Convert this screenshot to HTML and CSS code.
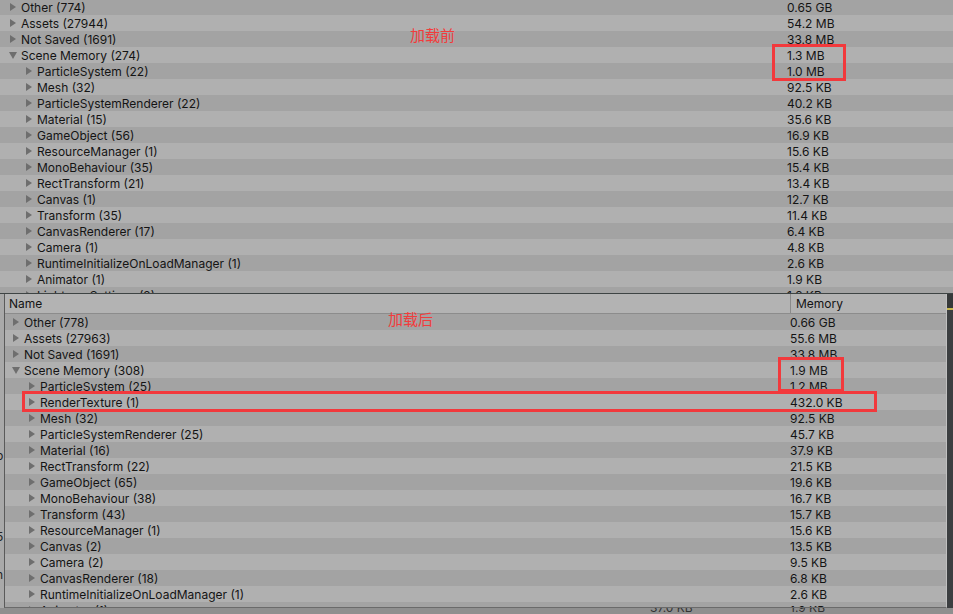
FILE: index.html
```html
<!DOCTYPE html>
<html>
<head>
<meta charset="utf-8">
<link rel="stylesheet" href="styles.css">
</head>
<body>
<div class="screen">
  <div class="top-panel">
    <div class="list list-top">
      <div class="row dark"><div class="name d0"><i class="arr"></i>Other (774)</div><div class="mem">0.65 GB</div></div>
      <div class="row light"><div class="name d0"><i class="arr"></i>Assets (27944)</div><div class="mem">54.2 MB</div></div>
      <div class="row dark"><div class="name d0"><i class="arr"></i>Not Saved (1691)</div><div class="mem">33.8 MB</div></div>
      <div class="row light"><div class="name d0"><i class="arr open"></i>Scene Memory (274)</div><div class="mem">1.3 MB</div></div>
      <div class="row dark"><div class="name d1"><i class="arr"></i>ParticleSystem (22)</div><div class="mem">1.0 MB</div></div>
      <div class="row light"><div class="name d1"><i class="arr"></i>Mesh (32)</div><div class="mem">92.5 KB</div></div>
      <div class="row dark"><div class="name d1"><i class="arr"></i>ParticleSystemRenderer (22)</div><div class="mem">40.2 KB</div></div>
      <div class="row light"><div class="name d1"><i class="arr"></i>Material (15)</div><div class="mem">35.6 KB</div></div>
      <div class="row dark"><div class="name d1"><i class="arr"></i>GameObject (56)</div><div class="mem">16.9 KB</div></div>
      <div class="row light"><div class="name d1"><i class="arr"></i>ResourceManager (1)</div><div class="mem">15.6 KB</div></div>
      <div class="row dark"><div class="name d1"><i class="arr"></i>MonoBehaviour (35)</div><div class="mem">15.4 KB</div></div>
      <div class="row light"><div class="name d1"><i class="arr"></i>RectTransform (21)</div><div class="mem">13.4 KB</div></div>
      <div class="row dark"><div class="name d1"><i class="arr"></i>Canvas (1)</div><div class="mem">12.7 KB</div></div>
      <div class="row light"><div class="name d1"><i class="arr"></i>Transform (35)</div><div class="mem">11.4 KB</div></div>
      <div class="row dark"><div class="name d1"><i class="arr"></i>CanvasRenderer (17)</div><div class="mem">6.4 KB</div></div>
      <div class="row light"><div class="name d1"><i class="arr"></i>Camera (1)</div><div class="mem">4.8 KB</div></div>
      <div class="row dark"><div class="name d1"><i class="arr"></i>RuntimeInitializeOnLoadManager (1)</div><div class="mem">2.6 KB</div></div>
      <div class="row light"><div class="name d1"><i class="arr"></i>Animator (1)</div><div class="mem">1.9 KB</div></div>
      <div class="row dark"><div class="name d1"><i class="arr"></i>LightmapSettings (2)</div><div class="mem">1.6 KB</div></div>
    </div>
  </div>

  <div class="lower">
    <div class="left-strip">
      <span class="frag f1">p</span>
      <span class="frag f2">5</span>
      <span class="frag f3">n</span>
    </div>
    <div class="panel">
      <div class="header">
        <div class="hname">Name</div>
        <div class="hmem">Memory</div>
      </div>
      <div class="list list-bottom">
        <div class="row dark"><div class="name d0"><i class="arr"></i>Other (778)</div><div class="mem">0.66 GB</div></div>
        <div class="row light"><div class="name d0"><i class="arr"></i>Assets (27963)</div><div class="mem">55.6 MB</div></div>
        <div class="row dark"><div class="name d0"><i class="arr"></i>Not Saved (1691)</div><div class="mem">33.8 MB</div></div>
        <div class="row light"><div class="name d0"><i class="arr open"></i>Scene Memory (308)</div><div class="mem">1.9 MB</div></div>
        <div class="row dark"><div class="name d1"><i class="arr"></i>ParticleSystem (25)</div><div class="mem">1.2 MB</div></div>
        <div class="row light"><div class="name d1"><i class="arr"></i>RenderTexture (1)</div><div class="mem">432.0 KB</div></div>
        <div class="row dark"><div class="name d1"><i class="arr"></i>Mesh (32)</div><div class="mem">92.5 KB</div></div>
        <div class="row light"><div class="name d1"><i class="arr"></i>ParticleSystemRenderer (25)</div><div class="mem">45.7 KB</div></div>
        <div class="row dark"><div class="name d1"><i class="arr"></i>Material (16)</div><div class="mem">37.9 KB</div></div>
        <div class="row light"><div class="name d1"><i class="arr"></i>RectTransform (22)</div><div class="mem">21.5 KB</div></div>
        <div class="row dark"><div class="name d1"><i class="arr"></i>GameObject (65)</div><div class="mem">19.6 KB</div></div>
        <div class="row light"><div class="name d1"><i class="arr"></i>MonoBehaviour (38)</div><div class="mem">16.7 KB</div></div>
        <div class="row dark"><div class="name d1"><i class="arr"></i>Transform (43)</div><div class="mem">15.7 KB</div></div>
        <div class="row light"><div class="name d1"><i class="arr"></i>ResourceManager (1)</div><div class="mem">15.6 KB</div></div>
        <div class="row dark"><div class="name d1"><i class="arr"></i>Canvas (2)</div><div class="mem">13.5 KB</div></div>
        <div class="row light"><div class="name d1"><i class="arr"></i>Camera (2)</div><div class="mem">9.5 KB</div></div>
        <div class="row dark"><div class="name d1"><i class="arr"></i>CanvasRenderer (18)</div><div class="mem">6.8 KB</div></div>
        <div class="row light"><div class="name d1"><i class="arr"></i>RuntimeInitializeOnLoadManager (1)</div><div class="mem">2.6 KB</div></div>
        <div class="row dark"><div class="name d1"><i class="arr"></i>Animator (1)</div><div class="mem">1.9 KB</div></div>
      </div>
    </div>
    <div class="right-strip"></div>
  </div>
  <div class="bottom-strip">
    <span class="bfrag b1">37.0 KB</span>
    <span class="bfrag b2">1.9 KB</span>
  </div>

  <div class="note note-before">加载前</div>
  <div class="note note-after">加载后</div>
  <div class="box box1"></div>
  <div class="box box2"></div>
  <div class="box box3"></div>
</div>
</body>
</html>
```

FILE: styles.css
```css
* { box-sizing: border-box; }
html, body { margin: 0; padding: 0; }
body {
  width: 953px;
  height: 614px;
  overflow: hidden;
  background: #a6a6a6;
  font-family: Inter, "Noto Sans", "Liberation Sans", sans-serif;
  font-size: 12px;
  color: #141414;
}
.screen {
  position: relative;
  width: 953px;
  height: 614px;
  overflow: hidden;
}
.top-panel {
  height: 293px;
  overflow: hidden;
}
.list-top { margin-top: -1px; }
.row {
  display: flex;
  align-items: center;
  height: 16px;
  white-space: nowrap;
}
.row.dark { background: #a3a3a3; }
.row.light { background: #b0b0b0; }
.name {
  display: flex;
  align-items: center;
  flex: none;
}
.list-top .name { width: 787px; }
.list-top .name.d0 { padding-left: 10px; }
.list-top .name.d1 { padding-left: 26px; }
.list-bottom .name { width: 785px; }
.list-bottom .name.d0 { padding-left: 8px; }
.list-bottom .name.d1 { padding-left: 24px; }
.arr {
  display: inline-block;
  width: 0;
  height: 0;
  border-left: 6px solid #6e6e6e;
  border-top: 4px solid transparent;
  border-bottom: 4px solid transparent;
  margin-right: 5px;
}
.arr.open {
  border-left: 4px solid transparent;
  border-right: 4px solid transparent;
  border-top: 7px solid #6e6e6e;
  border-bottom: 0;
  margin-left: -1px;
  margin-right: 4px;
}
.lower {
  display: flex;
  height: 315px;
  border-top: 1px solid #3e4444;
}
.left-strip {
  position: relative;
  width: 4px;
  flex: none;
  background: #a9a9a9;
  overflow: hidden;
}
.frag {
  position: absolute;
  left: -4px;
  font-size: 12px;
  color: #222;
}
.f1 { top: 154px; }
.f2 { top: 235px; }
.f3 { top: 273px; }
.panel {
  width: 943px;
  flex: none;
  background: #a3a3a3;
  border-left: 1px solid #5a5a5a;
  border-right: 1px solid #c0c0c0;
  border-bottom: 1px solid #6a6a6a;
  overflow: hidden;
}
.header {
  display: flex;
  height: 20px;
  background: #b3b3b3;
  border-bottom: 1px solid #8c8c8c;
}
.hname {
  width: 785px;
  flex: none;
  padding-left: 4px;
  line-height: 19px;
}
.hmem {
  flex: 1;
  padding-left: 5px;
  line-height: 19px;
  border-left: 1px solid #8a8a8a;
}
.right-strip {
  flex: 1;
  background: #3c3f41;
  border-top: 14px solid #36393a;
  box-shadow: inset 0 6px 0 -4px #c8b850;
}
.bottom-strip {
  position: relative;
  height: 6px;
  background: #8f8f8f;
  overflow: hidden;
}
.bfrag {
  position: absolute;
  top: -8px;
  color: #333;
}
.b1 { left: 650px; }
.b2 { left: 790px; }
.note {
  position: absolute;
  color: #f23c3c;
  font-family: "Noto Sans CJK SC", sans-serif;
  font-size: 15px;
  line-height: 16px;
}
.note-before { left: 410px; top: 27px; }
.note-after { left: 388px; top: 311px; }
.box {
  position: absolute;
  border: 3px solid #f2393c;
}
.box1 { left: 772px; top: 44px; width: 74px; height: 37px; }
.box2 { left: 778px; top: 357px; width: 66px; height: 35px; }
.box3 { left: 22px; top: 391px; width: 855px; height: 21px; }
```
